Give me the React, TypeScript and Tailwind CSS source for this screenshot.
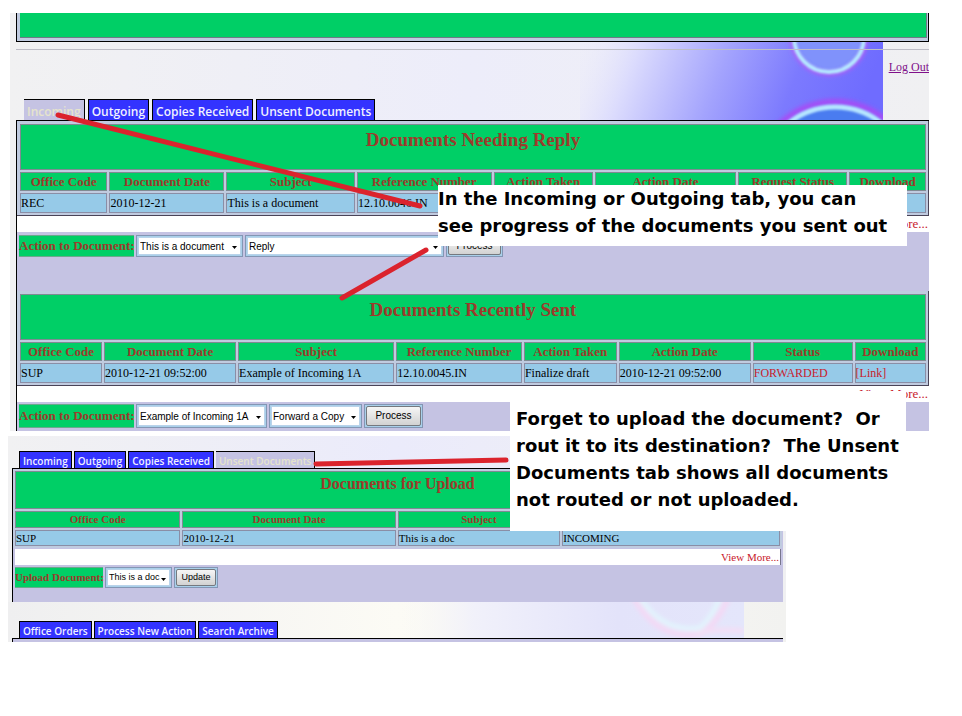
import type { ReactNode } from "react";

type Size = "lg" | "sm";

const tabBase = {
  lg: "h-[21px] px-[3px] text-[12px] leading-[23px]",
  sm: "h-[17px] px-[3px] text-[10px] leading-[18px]",
};

function Tabs({ items, active, size, label }: { items: string[]; active?: string; size: Size; label: string }) {
  return (
    <nav aria-label={label} className={size === "lg" ? "flex gap-[3px] pl-2" : "flex gap-[2px] pl-[7px]"}>
      {items.map((item) => (
        <button
          key={item}
          type="button"
          className={`relative whitespace-nowrap border-t border-r border-black font-semibold ${tabBase[size]} ${
            item === active ? "z-10 -mb-px bg-[#c5c3e3] text-[#e6e4cc]" : "border-l bg-[#3333ff] text-[#f0f0ff]"
          }`}
        >
          {item}
        </button>
      ))}
    </nav>
  );
}

type Column = { name: string; width: string };

function DocTable({ title, columns, row, size }: { title: string; columns: Column[]; row: ReactNode[]; size: Size }) {
  const lg = size === "lg";
  return (
    <table className="w-full table-fixed border-separate border-spacing-[2px] bg-[#c0cbe0]">
      <colgroup>
        {columns.map((c, i) => (
          <col key={i} className={c.width} />
        ))}
      </colgroup>
      <thead>
        <tr>
          <th
            colSpan={columns.length}
            className={`border border-[#7f8a93] bg-[#00cf66] p-0 align-top font-bold text-[#9c3b2c] ${
              lg ? "h-[46px] pt-[3px] text-[19px] leading-[24px]" : "h-[38px] pt-[3px] text-[16px] leading-[18px]"
            }`}
          >
            {title}
          </th>
        </tr>
        <tr>
          {columns.map((c, i) => (
            <th
              key={i}
              scope="col"
              className={`whitespace-nowrap border border-[#7f8a93] bg-[#00cf66] p-0 font-bold text-[#9c3b2c] ${
                lg ? "h-[19px] text-[13px] leading-[17px]" : "h-[17px] text-[11px] leading-[15px]"
              }`}
            >
              {c.name}
            </th>
          ))}
        </tr>
      </thead>
      <tbody>
        <tr>
          {row.map((cell, i) => (
            <td
              key={i}
              className={`whitespace-nowrap border border-[#8a8ea6] bg-[#96cae8] p-0 text-black ${
                lg ? "h-[20px] text-[12px] leading-[18px]" : "h-[16px] text-[11px] leading-[14px]"
              }`}
            >
              {cell}
            </td>
          ))}
        </tr>
      </tbody>
    </table>
  );
}

const controlText = { lg: "text-[10px]", sm: "text-[9px]" };

function Picker({
  id,
  label,
  value,
  width,
  size = "lg",
}: {
  id: string;
  label?: string;
  value: string;
  width: string;
  size?: Size;
}) {
  return (
    <div className={`relative border border-[#8496b4] bg-[#a9d0ea] p-px ${width}`}>
      <select
        id={id}
        aria-label={label}
        defaultValue={value}
        className={`block h-full w-full appearance-none border border-[#b9d3ea] bg-white pl-px font-['Liberation_Sans',Arial,sans-serif] text-black ${controlText[size]}`}
      >
        <option>{value}</option>
      </select>
      <svg viewBox="0 0 5 3" className="pointer-events-none absolute top-1/2 right-[5px] h-[3px] w-[5px]" aria-hidden="true">
        <path d="M0 0h5L2.5 3z" fill="#000" />
      </svg>
    </div>
  );
}

function ActionButton({ children, width, size = "lg" }: { children: ReactNode; width: string; size?: Size }) {
  return (
    <div className={`border border-[#8496b4] bg-[#a9d0ea] p-px ${width}`}>
      <button
        type="button"
        className={`block h-full w-full rounded-[2px] border border-[#75797f] bg-linear-to-b from-[#f6f6f6] to-[#d2d2d2] font-['Liberation_Sans',Arial,sans-serif] leading-none text-black ${controlText[size]}`}
      >
        {children}
      </button>
    </div>
  );
}

function FieldLabel({ htmlFor, children, className }: { htmlFor: string; children: ReactNode; className: string }) {
  return (
    <label
      htmlFor={htmlFor}
      className={`flex items-center whitespace-nowrap border-y border-[#6aa98c] bg-[#00cf66] font-bold text-[#9c3b2c] ${className}`}
    >
      {children}
    </label>
  );
}

function ViewMore({ className }: { className: string }) {
  return (
    <div className={`h-4 bg-white text-right leading-4 ${className}`}>
      <a href="#more" className="text-[#c8202c]">
        View More...
      </a>
    </div>
  );
}

function Orbs() {
  return (
    <svg
      viewBox="0 0 303 78"
      className="absolute top-0 right-[46px] h-[78px] w-[303px]"
      aria-hidden="true"
    >
      <defs>
        <linearGradient id="sky" x1="0" y1="0" x2="1" y2="0.1">
          <stop offset="0" stopColor="#ededfb" stopOpacity="0" />
          <stop offset="0.2" stopColor="#dcdcfd" />
          <stop offset="0.5" stopColor="#a3a3fd" />
          <stop offset="0.75" stopColor="#7c7afe" />
          <stop offset="1" stopColor="#6f6cff" />
        </linearGradient>
        <filter id="glow" x="-20%" y="-20%" width="140%" height="140%">
          <feGaussianBlur stdDeviation="2.2" />
        </filter>
        <filter id="soft" x="-20%" y="-20%" width="140%" height="140%">
          <feGaussianBlur stdDeviation="1.1" />
        </filter>
      </defs>
      <rect width="303" height="78" fill="url(#sky)" />
      <circle cx="249" cy="-5" r="35" fill="#8092fb" />
      <circle cx="249" cy="-5" r="37" fill="none" stroke="#b45cf5" strokeWidth="4" filter="url(#glow)" />
      <circle cx="249" cy="-5" r="35" fill="none" stroke="#b5eaff" strokeWidth="4" filter="url(#soft)" />
      <circle cx="255" cy="139" r="75" fill="#4a7cf0" />
      <circle cx="255" cy="139" r="79" fill="none" stroke="#a74cf5" strokeWidth="6" filter="url(#glow)" />
      <circle cx="255" cy="139" r="74" fill="none" stroke="#b5e6ff" strokeWidth="5" filter="url(#soft)" />
    </svg>
  );
}

function PaleOrbs() {
  return (
    <svg viewBox="0 0 360 40" className="absolute top-0 right-[42px] h-10 w-[360px]" aria-hidden="true">
      <defs>
        <linearGradient id="pale" x1="0" y1="0" x2="1" y2="0">
          <stop offset="0" stopColor="#fdfcf4" stopOpacity="0" />
          <stop offset="0.25" stopColor="#f1f1fa" />
          <stop offset="0.65" stopColor="#e3e3fa" />
          <stop offset="1" stopColor="#e4e6fb" />
        </linearGradient>
        <filter id="haze">
          <feGaussianBlur stdDeviation="2" />
        </filter>
      </defs>
      <rect width="360" height="40" fill="url(#pale)" />
      <g fill="none" filter="url(#haze)">
        <path d="M250 -4Q275 40 318 31Q334 20 344 -4" stroke="#f3d9f5" strokeWidth="6" />
        <path d="M256 -4Q280 32 316 26Q328 16 336 -4" stroke="#e2f4fd" strokeWidth="5" />
        <path d="M312 32Q330 26 360 29" stroke="#f3def5" strokeWidth="5" />
      </g>
    </svg>
  );
}

const needingReply: Column[] = [
  { name: "Office Code", width: "w-[9.8%]" },
  { name: "Document Date", width: "w-[12.9%]" },
  { name: "Subject", width: "w-[14.4%]" },
  { name: "Reference Number", width: "w-[15.1%]" },
  { name: "Action Taken", width: "w-[11.1%]" },
  { name: "Action Date", width: "w-[15.9%]" },
  { name: "Request Status", width: "w-[12.2%]" },
  { name: "Download", width: "w-[8.6%]" },
];

const recentlySent: Column[] = [
  { name: "Office Code", width: "w-[9.2%]" },
  { name: "Document Date", width: "w-[14.8%]" },
  { name: "Subject", width: "w-[17.5%]" },
  { name: "Reference Number", width: "w-[14.1%]" },
  { name: "Action Taken", width: "w-[10.4%]" },
  { name: "Action Date", width: "w-[14.8%]" },
  { name: "Status", width: "w-[11.2%]" },
  { name: "Download", width: "w-[8%]" },
];

const forUpload: Column[] = [
  { name: "Office Code", width: "w-[21.8%]" },
  { name: "Document Date", width: "w-[28.1%]" },
  { name: "Subject", width: "w-[21.4%]" },
  { name: "", width: "w-[28.7%]" },
];

const mainTabs = ["Incoming", "Outgoing", "Copies Received", "Unsent Documents"];
const tabFont = "font-['Open_Sans','Noto_Sans',sans-serif]";

export default function App() {
  return (
    <main className="relative min-h-screen overflow-hidden bg-white pt-[13px] font-['Liberation_Serif','Times_New_Roman',serif]">
      <section className="mr-[33px] ml-[10px] overflow-hidden bg-linear-to-r from-[#f1f1f2] via-[#ededfa] to-[#f0f0f2] pl-[6px]">
        <div className="border-r border-b border-l border-black bg-[#c0cbe0] pr-px pb-[3px] pl-[3px]">
          <div className="h-[25px] border-r border-b border-[#6f7a86] bg-[#00cf66]" />
        </div>
        <header className="relative flex h-[78px] flex-col pt-[7px]">
          <Orbs />
          <hr className="relative border-[#bdbdc6]" />
          <div className="relative flex justify-end pt-2">
            <a href="#logout" className="whitespace-nowrap text-[12px] leading-[18px] text-[#80108a] underline">
              Log Out
            </a>
          </div>
          <div className={`mt-auto ${tabFont}`}>
            <Tabs items={mainTabs} active="Incoming" size="lg" label="Documents" />
          </div>
        </header>
        <div className="border-t border-l border-black bg-[#c5c3e3] pb-[3px]">
          <div className="border-r border-b border-[#4a4458] bg-[#c0cbe0] pt-px pl-px">
            <DocTable
              title="Documents Needing Reply"
              columns={needingReply}
              row={["REC", "2010-12-21", "This is a document", "12.10.0046.IN", "", "", "", ""]}
              size="lg"
            />
          </div>
          <ViewMore className="pr-px text-[13px]" />
          <form className="flex h-[25px] gap-[2px] pt-[3px] pl-[2px]">
            <FieldLabel htmlFor="reply-doc" className="w-[115px] text-[13px]">
              Action to Document:
            </FieldLabel>
            <Picker id="reply-doc" value="This is a document" width="w-[107px]" />
            <Picker id="reply-action" label="Action" value="Reply" width="w-[199px]" />
            <ActionButton width="w-[57px]">Process</ActionButton>
          </form>
          <div className="mt-[34px] border-r border-b border-[#4a4458] bg-[#c0cbe0] pt-px pl-px">
            <DocTable
              title="Documents Recently Sent"
              columns={recentlySent}
              row={[
                "SUP",
                "2010-12-21 09:52:00",
                "Example of Incoming 1A",
                "12.10.0045.IN",
                "Finalize draft",
                "2010-12-21 09:52:00",
                <span className="text-[#c8202c]">FORWARDED</span>,
                <a href="#link" className="text-[#c8202c]">
                  [Link]
                </a>,
              ]}
              size="lg"
            />
          </div>
          <ViewMore className="pr-px text-[13px]" />
          <form className="flex h-[26px] gap-[2px] pt-[2px] pl-[2px]">
            <FieldLabel htmlFor="sent-doc" className="w-[115px] text-[13px]">
              Action to Document:
            </FieldLabel>
            <Picker id="sent-doc" value="Example of Incoming 1A" width="w-[131px]" />
            <Picker id="sent-action" label="Action" value="Forward a Copy" width="w-[93px]" />
            <ActionButton width="w-[59px]">Process</ActionButton>
          </form>
        </div>
      </section>

      <section className="mt-[5px] mr-[176px] ml-2 bg-linear-to-r from-[#f1f1f2] via-[#ebebfb] to-[#f0f0f2] pt-[15px]">
        <div className={`pl-1 ${tabFont}`}>
          <Tabs items={mainTabs} active="Unsent Documents" size="sm" label="Unsent documents" />
        </div>
        <div className="mr-[3px] ml-1 border-t border-l border-black bg-[#c5c3e3] pr-px pb-[14px]">
          <DocTable title="Documents for Upload" columns={forUpload} row={["SUP", "2010-12-21", "This is a doc", "INCOMING"]} size="sm" />
          <ViewMore className="mt-px mr-px ml-[2px] border-r border-[#77758c] pr-px text-[11px]" />
          <form className="flex h-[23px] gap-[2px] pt-[2px] pl-[2px]">
            <FieldLabel htmlFor="upload-doc" className="w-[88px] text-[11px]">
              Upload Document:
            </FieldLabel>
            <Picker id="upload-doc" value="This is a doc" width="w-[67px]" size="sm" />
            <ActionButton width="w-[44px]" size="sm">
              Update
            </ActionButton>
          </form>
        </div>
        <footer className="relative overflow-hidden bg-linear-to-r from-[#efeff0] via-[#fcfbf5] to-[#f2f2f0]">
          <PaleOrbs />
          <div className={`relative pt-[19px] pl-1 ${tabFont}`}>
            <Tabs items={["Office Orders", "Process New Action", "Search Archive"]} size="sm" label="Office" />
          </div>
          <div className="relative mr-[3px] ml-1 h-1 border-t border-l border-black bg-[#c5c3e3]" />
        </footer>
      </section>

      <aside className="absolute top-[185px] left-[438px] h-[61px] w-[469px] bg-white font-['DejaVu_Sans',Verdana,sans-serif] text-[18px] leading-[27px] font-bold whitespace-nowrap text-black">
        In the Incoming or Outgoing tab, you can
        <br />
        see progress of the documents you sent out
      </aside>
      <aside className="absolute top-[391px] left-[510px] h-[140px] w-[396px] bg-white pt-[14px] pl-[6px] font-['DejaVu_Sans',Verdana,sans-serif] text-[18px] leading-[27px] font-bold whitespace-pre text-black">
        {"Forget to upload the document?  Or\nrout it to its destination?  The Unsent\nDocuments tab shows all documents\nnot routed or not uploaded."}
      </aside>
      <svg viewBox="0 0 520 480" className="pointer-events-none absolute top-0 left-0 z-20 h-[480px] w-[520px]" aria-hidden="true">
        <g fill="none" stroke="#db232d" strokeWidth="5" strokeLinecap="round">
          <path d="M58 115L420 206" />
          <path d="M342 298L426 250" />
          <path d="M316 464L506 460" />
        </g>
      </svg>
    </main>
  );
}
